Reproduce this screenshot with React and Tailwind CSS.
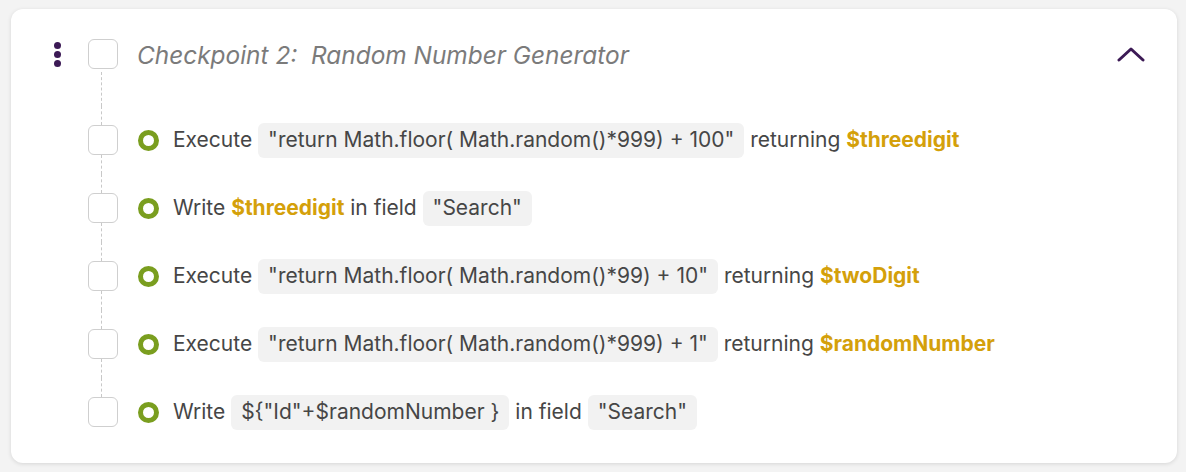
import React from 'react';

const Chip = ({ children }) => (
  <span className="inline-flex items-center h-[35px] px-[10px] rounded-[6px] bg-[#f2f2f2] text-[#464646]">
    {children}
  </span>
);

const Var = ({ children }) => (
  <span className="font-bold text-[#d4a00a]">{children}</span>
);

const Ring = () => (
  <span className="block w-[21px] h-[21px] rounded-full border-[5px] border-[#7a9e1f] shrink-0" />
);

const Box = () => (
  <div className="w-[30px] h-[30px] rounded-[6px] border border-[#cfcfcf] bg-white shrink-0" />
);

const steps = [
  (
    <>
      Execute <Chip>"return Math.floor( Math.random()*999) + 100"</Chip> returning <Var>$threedigit</Var>
    </>
  ),
  (
    <>
      Write <Var>$threedigit</Var> in field <Chip>"Search"</Chip>
    </>
  ),
  (
    <>
      Execute <Chip>"return Math.floor( Math.random()*99) + 10"</Chip> returning <Var>$twoDigit</Var>
    </>
  ),
  (
    <>
      Execute <Chip>"return Math.floor( Math.random()*999) + 1"</Chip> returning <Var>$randomNumber</Var>
    </>
  ),
  (
    <>
      Write <Chip>{'${"Id"+$randomNumber }'}</Chip> in field <Chip>"Search"</Chip>
    </>
  ),
];

export default function App() {
  return (
    <div className="w-[1186px] h-[472px] bg-[#f3f3f3] pt-[9px] pl-[11px] font-['Inter',sans-serif]">
      <div className="w-[1166px] h-[454px] bg-white rounded-[12px] shadow-[0_1px_4px_rgba(0,0,0,0.12)] pl-[41px] pr-[32px] pt-[27px]">
        <div className="flex items-center h-[36px]">
          <div className="flex flex-col gap-[2px] w-[36px] items-start pl-[2px]">
            <span className="w-[7px] h-[7px] rounded-full bg-[#3c1a55]" />
            <span className="w-[7px] h-[7px] rounded-full bg-[#3c1a55]" />
            <span className="w-[7px] h-[7px] rounded-full bg-[#3c1a55]" />
          </div>
          <Box />
          <div className="ml-[19px] mt-[2px] text-[24.4px] leading-[36px] italic text-[#7b7b7b] whitespace-pre">
            Checkpoint 2:  Random Number Generator
          </div>
          <div className="ml-auto">
            <svg width="28" height="16" viewBox="0 0 28 16" className="block">
              <path d="M2 14 L14 3 L26 14" fill="none" stroke="#3c1a55" strokeWidth="3" strokeLinecap="round" strokeLinejoin="round" />
            </svg>
          </div>
        </div>
        <div className="flex">
          <div className="w-[36px]" />
          <div className="w-[30px] h-[34px] pl-[13px]">
            <div className="h-full border-l border-dashed border-[#c8c8c8]" />
          </div>
        </div>
        {steps.map((content, i) => (
          <div key={i} className="flex items-center h-[68px]">
            <div className="w-[36px]" />
            <div className="flex flex-col w-[30px] h-full">
              <div className="flex-1 pl-[13px]">
                <div className="h-full border-l border-dashed border-[#c8c8c8]" />
              </div>
              <Box />
              <div className="flex-1 pl-[13px]">
                {i < steps.length - 1 && <div className="h-full border-l border-dashed border-[#c8c8c8]" />}
              </div>
            </div>
            <div className="ml-[20px]">
              <Ring />
            </div>
            <div className="ml-[14px] flex items-center text-[21px] text-[#464646] whitespace-pre">
              {content}
            </div>
          </div>
        ))}
      </div>
    </div>
  );
}
